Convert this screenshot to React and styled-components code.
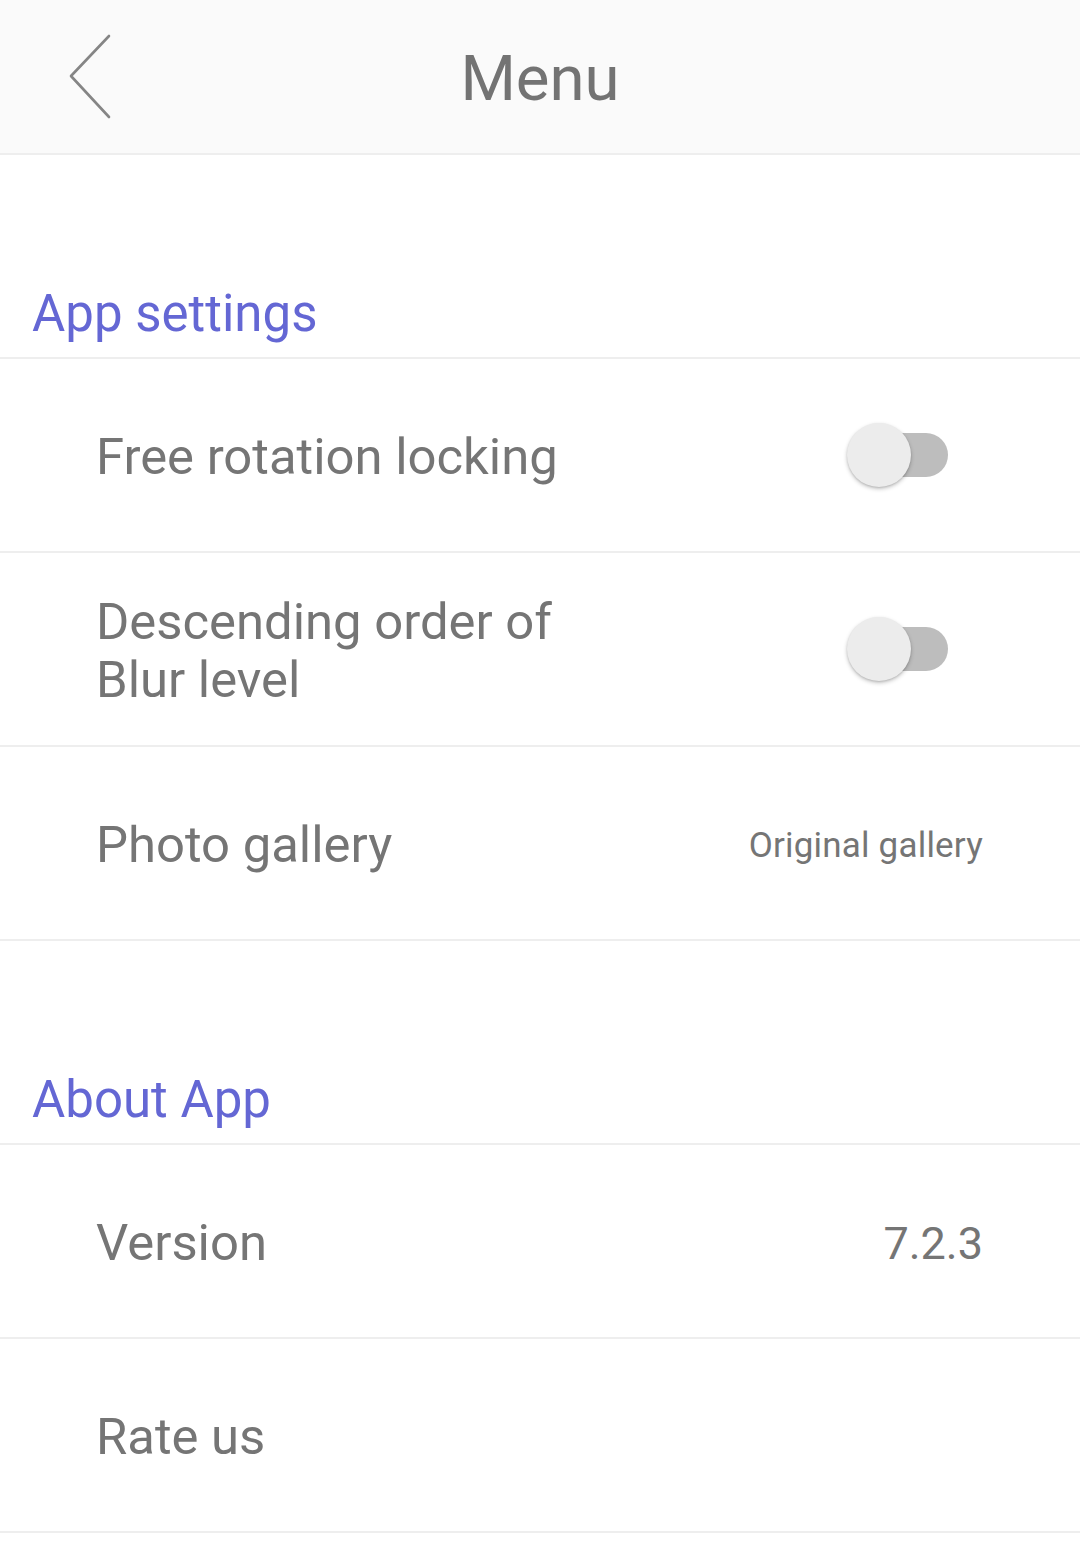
import React, { useState } from 'react';
import styled, { createGlobalStyle } from 'styled-components';

const GlobalStyle = createGlobalStyle`
  html, body {
    margin: 0;
    padding: 0;
    background: #ffffff;
    font-family: Roboto, "Noto Sans", "Liberation Sans", sans-serif;
  }
`;

const Page = styled.div`
  width: 1080px;
  min-height: 1555px;
  background: #ffffff;
`;

const Header = styled.header`
  height: 153px;
  background: #fafafa;
  border-bottom: 2px solid #eeeeee;
  display: grid;
  grid-template-columns: 200px 1fr 200px;
  align-items: center;
`;

const BackButton = styled.button`
  justify-self: start;
  margin-left: 66px;
  padding: 0;
  border: none;
  background: none;
  display: flex;
  cursor: pointer;
`;

const Title = styled.h1`
  margin: 0;
  text-align: center;
  font-size: 63.5px;
  font-weight: 400;
  color: #737373;
  line-height: 1;
  padding-top: 4px;
`;

const SectionTitle = styled.div`
  height: 204px;
  box-sizing: border-box;
  display: flex;
  align-items: flex-end;
  padding: 0 0 18px 32px;
  border-bottom: 2px solid #eeeeee;
  font-size: 51px;
  color: #6467d4;
  line-height: 1;
`;

const Row = styled.div`
  height: 194px;
  box-sizing: border-box;
  border-bottom: 2px solid #eeeeee;
  display: flex;
  align-items: center;
  justify-content: space-between;
  padding: 0 ${(p) => (p.$toggle ? '132px' : '97px')} 0 96px;
`;

const Label = styled.div`
  font-size: 50.8px;
  line-height: 58px;
  color: #757575;
  max-width: 480px;
  padding-top: 4px;
`;

const Value = styled.div`
  font-size: ${(p) => (p.$small ? '35px' : '45px')};
  color: #757575;
  letter-spacing: ${(p) => (p.$small ? '0.2px' : '0')};
  padding-top: 4px;
`;

const Track = styled.button`
  position: relative;
  width: 88px;
  height: 44px;
  border: none;
  padding: 0;
  border-radius: 22px;
  background: ${(p) => (p.$on ? '#a9abe8' : '#bdbdbd')};
  cursor: pointer;
`;

const Thumb = styled.span`
  position: absolute;
  top: -10px;
  left: ${(p) => (p.$on ? '37px' : '-13px')};
  width: 64px;
  height: 64px;
  border-radius: 50%;
  background: ${(p) => (p.$on ? '#6467d4' : '#ececec')};
  box-shadow: 0 2px 4px rgba(0, 0, 0, 0.22), 0 1px 2px rgba(0, 0, 0, 0.12);
`;

const Toggle = ({ on, onChange }) => (
  <Track $on={on} onClick={() => onChange(!on)}>
    <Thumb $on={on} />
  </Track>
);

const App = () => {
  const [rotation, setRotation] = useState(false);
  const [descending, setDescending] = useState(false);

  return (
    <Page>
      <GlobalStyle />
      <Header>
        <BackButton>
          <svg width="46" height="86" viewBox="0 0 46 86">
            <path d="M43 2 L5 42 L43 83" fill="none" stroke="#858585" strokeWidth="2.6" strokeLinecap="round" strokeLinejoin="round" />
          </svg>
        </BackButton>
        <Title>Menu</Title>
        <div />
      </Header>

      <SectionTitle>App settings</SectionTitle>
      <Row $toggle>
        <Label>Free rotation locking</Label>
        <Toggle on={rotation} onChange={setRotation} />
      </Row>
      <Row $toggle>
        <Label>Descending order of Blur level</Label>
        <Toggle on={descending} onChange={setDescending} />
      </Row>
      <Row>
        <Label>Photo gallery</Label>
        <Value $small>Original gallery</Value>
      </Row>

      <SectionTitle>About App</SectionTitle>
      <Row>
        <Label>Version</Label>
        <Value>7.2.3</Value>
      </Row>
      <Row>
        <Label>Rate us</Label>
      </Row>
    </Page>
  );
};

export default App;
